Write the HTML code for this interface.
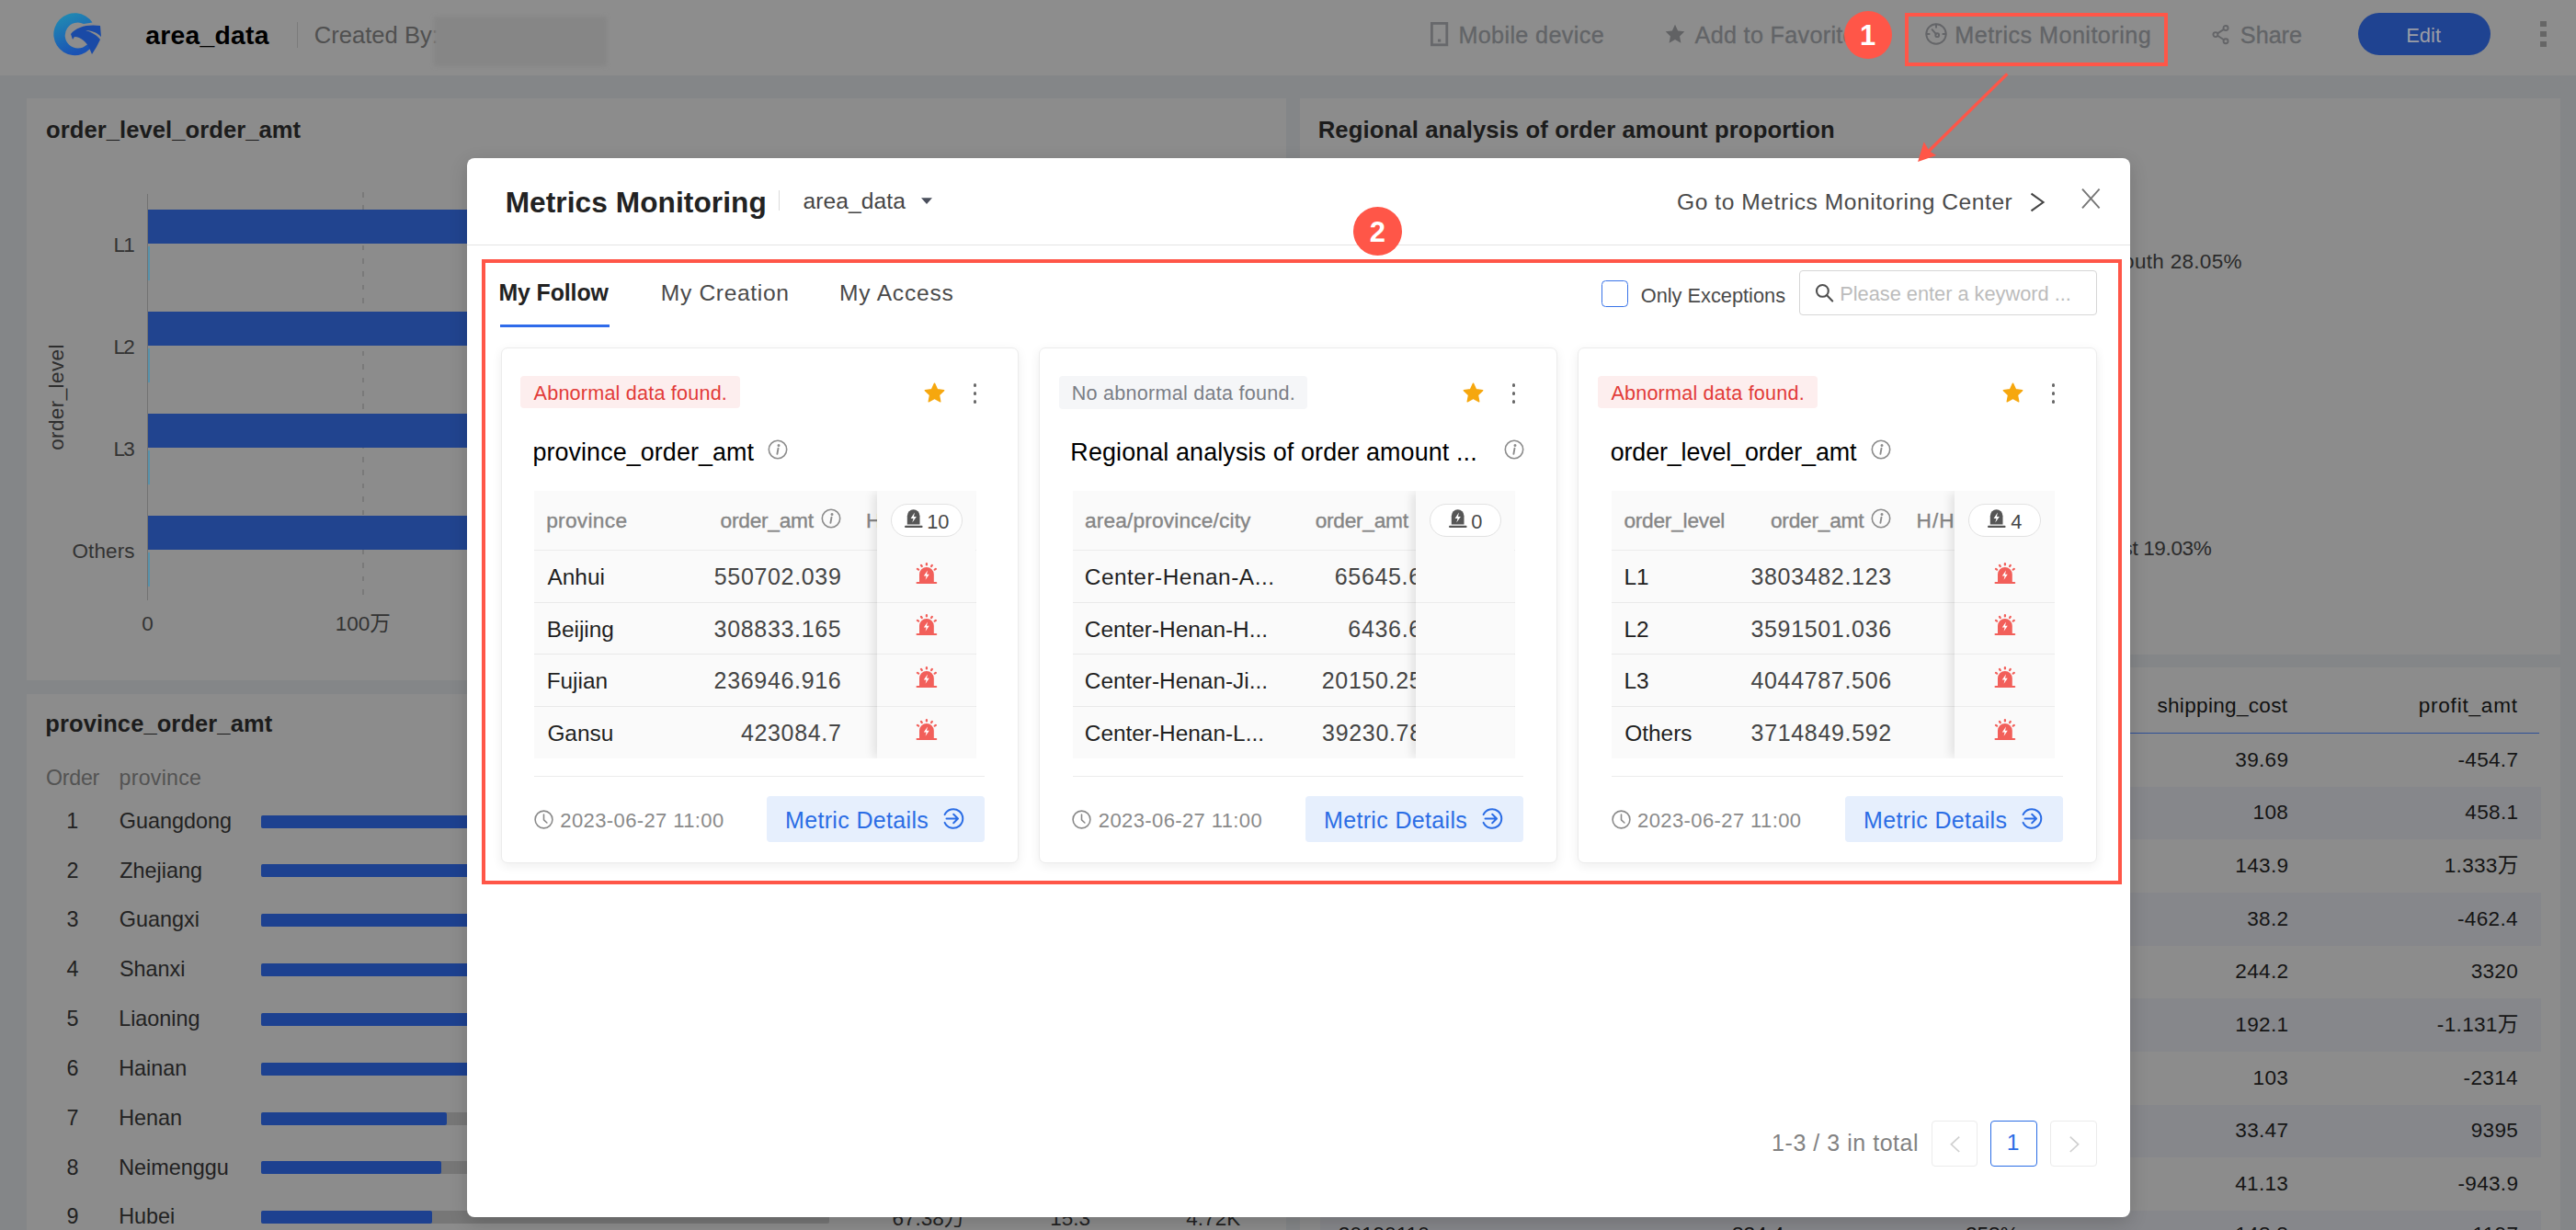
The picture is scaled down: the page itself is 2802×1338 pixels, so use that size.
<!DOCTYPE html>
<html lang="en"><head><meta charset="utf-8"><title>area_data - Metrics Monitoring</title>
<style>
*{box-sizing:border-box;margin:0;padding:0}
html,body{width:2802px;height:1338px;background:#848688}
body{font-family:'Liberation Sans','Noto Sans CJK SC',sans-serif;position:relative}
#app{position:absolute;left:0;top:0;width:2802px;height:1338px;overflow:hidden}
#app div,#app span,#app svg,#app header,#app section,#app button,#app i,#app b,#app ul,#app li,#app h1,#app h2,#app h3,#app table,#app a,#app label,#app nav{position:absolute}
.t{white-space:pre;line-height:1;font-weight:400}
h1,h2,h3{font-weight:700}
button{border:0;background:none;font:inherit}
ul{list-style:none}
.topbar{left:0;top:0;width:2802px;height:82px;background:#8d8d8d}
.panel{background:#8c8c8c}
.modal{left:508px;top:172px;width:1809.4px;height:1151.8px;background:#fff;border-radius:8px;box-shadow:0 6px 20px rgba(0,0,0,.16)}
.card{height:560.7px;top:378px;background:#fff;border:1px solid #ececec;border-radius:7px;box-shadow:0 3px 12px rgba(0,0,0,.07)}
.tbl{background:#fafafa;overflow:hidden}
.fix{background:#fafafa;box-shadow:-6px 0 10px -2px rgba(0,0,0,.10)}
.pill{background:#fff;border:1px solid #e2e2e2;border-radius:18px}
.ln{background:#ececec;height:1px}
.redbox{border:4px solid #ff5648}
.dot{border-radius:50%;background:#ff5648}
</style></head>
<body><div id="app">
<header class="topbar"><svg style="left:56px;top:9px" width="58" height="54" viewBox="0 0 58 54">
<defs><linearGradient id="lg" x1="0" y1="0" x2="0.4" y2="1"><stop offset="0" stop-color="#2191b2"/><stop offset="1" stop-color="#1a52b4"/></linearGradient></defs>
<path d="M44.5 15.5 A23 23 0 1 0 47 36 L38 40 A14 14 0 1 1 35 17 Z" fill="url(#lg)"/>
<path d="M21 28 C27 20 40 17 53 19 L54 31 C49 26 43 24 37 24 C44 26 50 30 53 34 L49 42 L44 50 L41 43 C38 37 32 31 25 31 L23 34 Z" fill="#1a4aa6"/>
</svg><h1 class="t" style="left:158.29px;top:23.85px;font-size:28.3px;color:#000;font-weight:700;letter-spacing:0.25px;">area_data</h1><div style="left:323px;top:24px;width:1.2px;height:27.5px;background:#7b7b7b"></div><span class="t" style="left:341.72px;top:26.2px;font-size:25.6px;color:#505050;">Created By:</span><div style="left:472px;top:18px;width:188px;height:54px;background:#868686;filter:blur(2px);border-radius:3px"></div><svg style="left:1554px;top:22px" width="24" height="30" viewBox="0 0 24 30"><rect x="3.4" y="3.4" width="16.4" height="23.4" fill="none" stroke="#67686b" stroke-width="2.8"/><rect x="10" y="20.6" width="3.2" height="3" fill="#67686b"/></svg><span class="t" style="left:1586.38px;top:26.4px;font-size:25.2px;color:#626467;letter-spacing:0.36px;-webkit-text-stroke:.3px #626467;">Mobile device</span><svg style="left:1810.5px;top:26px" width="22" height="21.4" viewBox="0 0 24 23" preserveAspectRatio="none"><path d="M12 0.8l3.4 7.2 7.8 1-5.7 5.4 1.5 7.8L12 18.4l-7 3.8 1.5-7.8L0.8 9l7.8-1z" fill="#616264"/></svg><span class="t" style="left:1843.6px;top:26.4px;font-size:25.2px;color:#626467;letter-spacing:0.3px;-webkit-text-stroke:.3px #626467;">Add to Favorites</span><svg style="left:2093px;top:24px" width="26" height="26" viewBox="0 0 26 26" fill="none" stroke="#646568" stroke-width="1.9" stroke-linecap="round"><circle cx="13" cy="13" r="10.7"/><path d="M13 2.6v3.2M2.6 13h3M23.4 13h-3"/><circle cx="14.2" cy="14.2" r="1.9"/><path d="M12.8 12.8L8.6 8.2"/></svg><span class="t" style="left:2126.28px;top:26.4px;font-size:25.2px;color:#626467;letter-spacing:0.45px;-webkit-text-stroke:.3px #626467;">Metrics Monitoring</span><svg style="left:2405.3px;top:25.6px" width="21.4" height="23.2" viewBox="0 0 24 26" fill="none" stroke="#646568" stroke-width="2.1"><circle cx="18" cy="5" r="2.8"/><circle cx="5.5" cy="13" r="2.8"/><circle cx="18" cy="21" r="2.8"/><path d="M8 11.6L15.6 6.6M8 14.4L15.6 19.4"/></svg><span class="t" style="left:2436.87px;top:26.4px;font-size:25.2px;color:#626467;letter-spacing:-0.02px;-webkit-text-stroke:.3px #626467;">Share</span><button style="left:2565px;top:14px;width:144px;height:46px;background:#1f4391;border-radius:23px"><span class="t" style="left:52.2px;top:13.5px;font-size:22px;color:#9a9da6;">Edit</span></button><div style="left:2763px;top:23px;width:6.8px;height:6.4px;background:#666"></div><div style="left:2763px;top:34px;width:6.8px;height:6.4px;background:#666"></div><div style="left:2763px;top:44.7px;width:6.8px;height:6.4px;background:#666"></div></header>
<section class="panel" style="left:29px;top:107px;width:1370px;height:633px;"><h2 class="t" style="left:21.1px;top:22.2px;font-size:25.6px;color:#1c1c1c;font-weight:700;letter-spacing:0.05px;">order_level_order_amt</h2></section><div style="left:160px;top:211px;width:1px;height:442px;background:#727272"></div><div style="left:394px;top:209.3px;width:1.8px;height:443.7px;background:repeating-linear-gradient(to bottom,#7a7a7a 0,#7a7a7a 5.6px,transparent 5.6px,transparent 14.4px)"></div><div style="left:161px;top:228px;width:939px;height:37px;background:#21448f"></div><div style="left:160.6px;top:268px;width:2px;height:36.5px;background:#5791aa"></div><span class="t" style="left:123.5px;top:256.25px;font-size:22.5px;color:#333;letter-spacing:-1.69px;">L1</span><div style="left:161px;top:339px;width:939px;height:37px;background:#21448f"></div><div style="left:160.6px;top:379px;width:2px;height:36.5px;background:#5791aa"></div><span class="t" style="left:123.5px;top:367.25px;font-size:22.5px;color:#333;letter-spacing:-1.69px;">L2</span><div style="left:161px;top:450px;width:939px;height:37px;background:#21448f"></div><div style="left:160.6px;top:490px;width:2px;height:36.5px;background:#5791aa"></div><span class="t" style="left:123.5px;top:478.25px;font-size:22.5px;color:#333;letter-spacing:-1.8px;">L3</span><div style="left:161px;top:561px;width:939px;height:37px;background:#21448f"></div><div style="left:160.6px;top:601px;width:2px;height:36.5px;background:#5791aa"></div><span class="t" style="left:78.49px;top:589.25px;font-size:22.5px;color:#333;letter-spacing:0.12px;">Others</span><span class="t" style="left:-0.9px;top:-18.75px;font-size:22.5px;color:#2e2e2e;letter-spacing:0.4px;left:61.6px;top:432px;transform:translate(-50%,-50%) rotate(-90deg);">order_level</span><span class="t" style="left:154.26px;top:668.25px;font-size:22.5px;color:#333;">0</span><span class="t" style="left:364.81px;top:668.25px;font-size:22.5px;color:#333;">100万</span><section class="panel" style="left:29px;top:755px;width:1370px;height:645px;"><h2 class="t" style="left:20.34px;top:20.25px;font-size:25.5px;color:#1c1c1c;font-weight:700;letter-spacing:0.1px;">province_order_amt</h2><span class="t" style="left:20.96px;top:80.4px;font-size:23.2px;color:#535353;letter-spacing:-0.24px;">Order</span><span class="t" style="left:100.61px;top:80.4px;font-size:23.2px;color:#535353;letter-spacing:0.24px;">province</span></section><span class="t" style="left:72.16px;top:882.3px;font-size:23.4px;color:#222;">1</span><span class="t" style="left:129.83px;top:882.3px;font-size:23.4px;color:#222;">Guangdong</span><div style="left:284px;top:886.5px;width:618px;height:14px;background:#777;border-radius:2px"></div><div style="left:284px;top:886.5px;width:816px;height:14px;background:#1d4190;border-radius:2px"></div><span class="t" style="left:72.45px;top:936.3px;font-size:23.4px;color:#222;">2</span><span class="t" style="left:130.3px;top:936.3px;font-size:23.4px;color:#222;">Zhejiang</span><div style="left:284px;top:940.35px;width:618px;height:14px;background:#777;border-radius:2px"></div><div style="left:284px;top:940.35px;width:816px;height:14px;background:#1d4190;border-radius:2px"></div><span class="t" style="left:72.56px;top:989.3px;font-size:23.4px;color:#222;">3</span><span class="t" style="left:129.83px;top:989.3px;font-size:23.4px;color:#222;">Guangxi</span><div style="left:284px;top:994.2px;width:618px;height:14px;background:#777;border-radius:2px"></div><div style="left:284px;top:994.2px;width:816px;height:14px;background:#1d4190;border-radius:2px"></div><span class="t" style="left:72.56px;top:1043.3px;font-size:23.4px;color:#222;">4</span><span class="t" style="left:129.95px;top:1043.3px;font-size:23.4px;color:#222;">Shanxi</span><div style="left:284px;top:1048.05px;width:618px;height:14px;background:#777;border-radius:2px"></div><div style="left:284px;top:1048.05px;width:816px;height:14px;background:#1d4190;border-radius:2px"></div><span class="t" style="left:72.51px;top:1097.3px;font-size:23.4px;color:#222;">5</span><span class="t" style="left:129.13px;top:1097.3px;font-size:23.4px;color:#222;">Liaoning</span><div style="left:284px;top:1101.9px;width:618px;height:14px;background:#777;border-radius:2px"></div><div style="left:284px;top:1101.9px;width:816px;height:14px;background:#1d4190;border-radius:2px"></div><span class="t" style="left:72.39px;top:1151.3px;font-size:23.4px;color:#222;">6</span><span class="t" style="left:129.13px;top:1151.3px;font-size:23.4px;color:#222;">Hainan</span><div style="left:284px;top:1155.75px;width:618px;height:14px;background:#777;border-radius:2px"></div><div style="left:284px;top:1155.75px;width:816px;height:14px;background:#1d4190;border-radius:2px"></div><span class="t" style="left:72.45px;top:1205.3px;font-size:23.4px;color:#222;">7</span><span class="t" style="left:129.13px;top:1205.3px;font-size:23.4px;color:#222;">Henan</span><div style="left:284px;top:1209.6px;width:618px;height:14px;background:#777;border-radius:2px"></div><div style="left:284px;top:1209.6px;width:202px;height:14px;background:#1d4190;border-radius:2px"></div><span class="t" style="left:72.51px;top:1259.3px;font-size:23.4px;color:#222;">8</span><span class="t" style="left:129.13px;top:1259.3px;font-size:23.4px;color:#222;">Neimenggu</span><div style="left:284px;top:1263.45px;width:618px;height:14px;background:#777;border-radius:2px"></div><div style="left:284px;top:1263.45px;width:196px;height:14px;background:#1d4190;border-radius:2px"></div><span class="t" style="left:72.51px;top:1312.3px;font-size:23.4px;color:#222;">9</span><span class="t" style="left:129.13px;top:1312.3px;font-size:23.4px;color:#222;">Hubei</span><div style="left:284px;top:1317.3px;width:618px;height:14px;background:#777;border-radius:2px"></div><div style="left:284px;top:1317.3px;width:186px;height:14px;background:#1d4190;border-radius:2px"></div><span class="t" style="left:970.55px;top:1315.25px;font-size:22.5px;color:#222;">67.38万</span><span class="t" style="left:1142.13px;top:1315.25px;font-size:22.5px;color:#222;">15.3</span><span class="t" style="left:1290.36px;top:1315.25px;font-size:22.5px;color:#222;">4.72K</span><section class="panel" style="left:1414px;top:107px;width:1371px;height:605px;"><h2 class="t" style="left:19.73px;top:22.15px;font-size:25.7px;color:#1c1c1c;font-weight:700;letter-spacing:0.09px;">Regional analysis of order amount proportion</h2></section><span class="t" style="left:2293.81px;top:274.25px;font-size:22.5px;color:#2a2a2a;letter-spacing:0.3px;">South 28.05%</span><span class="t" style="left:2275.86px;top:586.25px;font-size:22.5px;color:#2a2a2a;letter-spacing:-0.35px;">West 19.03%</span><section class="panel" style="left:1414px;top:726px;width:1371px;height:674px;"></section><span class="t" style="left:2346.43px;top:757.2px;font-size:22.6px;color:#111;letter-spacing:0.29px;">shipping_cost</span><span class="t" style="left:2630.64px;top:757.2px;font-size:22.6px;color:#111;letter-spacing:0.77px;">profit_amt</span><div style="left:1436px;top:796.5px;width:1326px;height:1.3px;background:#2e4f97"></div><span class="t" style="left:2431.29px;top:816.2px;font-size:22.6px;color:#151515;letter-spacing:0.3px;">39.69</span><span class="t" style="left:2673.46px;top:816.2px;font-size:22.6px;color:#151515;letter-spacing:0.3px;">-454.7</span><div style="left:1436px;top:855.67px;width:1327.5px;height:57.67px;background:#86878b"></div><span class="t" style="left:2450.62px;top:873.2px;font-size:22.6px;color:#151515;letter-spacing:0.3px;">108</span><span class="t" style="left:2681.29px;top:873.2px;font-size:22.6px;color:#151515;letter-spacing:0.3px;">458.1</span><span class="t" style="left:2431.29px;top:931.2px;font-size:22.6px;color:#151515;letter-spacing:0.3px;">143.9</span><span class="t" style="left:2658.7px;top:931.2px;font-size:22.6px;color:#151515;letter-spacing:0.3px;">1.333万</span><div style="left:1436px;top:971.01px;width:1327.5px;height:57.67px;background:#86878b"></div><span class="t" style="left:2444.16px;top:989.2px;font-size:22.6px;color:#151515;letter-spacing:0.3px;">38.2</span><span class="t" style="left:2673.01px;top:989.2px;font-size:22.6px;color:#151515;letter-spacing:0.3px;">-462.4</span><span class="t" style="left:2431.29px;top:1046.2px;font-size:22.6px;color:#151515;letter-spacing:0.3px;">244.2</span><span class="t" style="left:2687.64px;top:1046.2px;font-size:22.6px;color:#151515;letter-spacing:0.3px;">3320</span><div style="left:1436px;top:1086.35px;width:1327.5px;height:57.67px;background:#86878b"></div><span class="t" style="left:2431.29px;top:1104.2px;font-size:22.6px;color:#151515;letter-spacing:0.3px;">192.1</span><span class="t" style="left:2650.87px;top:1104.2px;font-size:22.6px;color:#151515;letter-spacing:0.3px;">-1.131万</span><span class="t" style="left:2450.62px;top:1162.2px;font-size:22.6px;color:#151515;letter-spacing:0.3px;">103</span><span class="t" style="left:2679.59px;top:1162.2px;font-size:22.6px;color:#151515;letter-spacing:0.3px;">-2314</span><div style="left:1436px;top:1201.69px;width:1327.5px;height:57.67px;background:#86878b"></div><span class="t" style="left:2431.29px;top:1219.2px;font-size:22.6px;color:#151515;letter-spacing:0.3px;">33.47</span><span class="t" style="left:2687.75px;top:1219.2px;font-size:22.6px;color:#151515;letter-spacing:0.3px;">9395</span><span class="t" style="left:2431.17px;top:1277.2px;font-size:22.6px;color:#151515;letter-spacing:0.3px;">41.13</span><span class="t" style="left:2673.46px;top:1277.2px;font-size:22.6px;color:#151515;letter-spacing:0.3px;">-943.9</span><div style="left:1436px;top:1317.03px;width:1327.5px;height:57.67px;background:#86878b"></div><span class="t" style="left:2431.17px;top:1332.2px;font-size:22.6px;color:#151515;letter-spacing:0.3px;">148.8</span><span class="t" style="left:2681.72px;top:1332.2px;font-size:22.6px;color:#151515;letter-spacing:0.3px;">-1197</span><span class="t" style="left:1455.87px;top:1332.2px;font-size:22.6px;color:#151515;">20190110</span><span class="t" style="left:1884.04px;top:1332.2px;font-size:22.6px;color:#151515;">824.4</span><span class="t" style="left:2137.97px;top:1332.2px;font-size:22.6px;color:#151515;">258%</span><div class="modal">
<h2 class="t" style="left:41.65px;top:33.2px;font-size:31.6px;color:#222;font-weight:700;letter-spacing:0.09px;">Metrics Monitoring</h2><div style="left:339px;top:35px;width:1.2px;height:22px;background:#dcdcdc"></div><span class="t" style="left:365.62px;top:35.2px;font-size:24.6px;color:#454545;letter-spacing:0.06px;">area_data</span><svg style="left:493px;top:42px" width="14" height="9" viewBox="0 0 14 9"><path d="M1 1.2h12L7 8z" fill="#4a4f5c"/></svg><a class="t" style="left:1316.07px;top:36.2px;font-size:24.6px;color:#4a4a4a;letter-spacing:0.54px;">Go to Metrics Monitoring Center</a><svg style="left:1698px;top:36px" width="20" height="24" viewBox="0 0 20 24" fill="none" stroke="#454545" stroke-width="2.1"><path d="M3.5 2.6L16.5 12 3.5 21.4"/></svg><svg style="left:1754px;top:31px" width="24" height="26" viewBox="0 0 24 26" fill="none" stroke="#777" stroke-width="1.9"><path d="M3 2.6L21.6 23.4M21.6 2.6L3 23.4"/></svg><div style="left:0px;top:94px;width:1809.4px;height:1.2px;background:#e4e4e4"></div><span class="t" style="left:34.38px;top:133.55px;font-size:24.9px;color:#222;font-weight:700;letter-spacing:-0.1px;">My Follow</span><div style="left:36px;top:181px;width:119px;height:3.3px;background:#2f6bea"></div><span class="t" style="left:210.83px;top:135.2px;font-size:24.6px;color:#4a4a4a;letter-spacing:0.65px;">My Creation</span><span class="t" style="left:405.03px;top:135.2px;font-size:24.6px;color:#4a4a4a;letter-spacing:0.79px;">My Access</span><div style="left:1234px;top:133px;width:29px;height:29px;border:1.6px solid #3a74e8;border-radius:4.5px;background:#fff"></div><label class="t" style="left:1276.72px;top:138.6px;font-size:21.8px;color:#4a4a4a;letter-spacing:-0.01px;">Only Exceptions</label><div style="left:1449px;top:122.4px;width:324px;height:48.6px;border:1px solid #d6d6d6;border-radius:4px;background:#fff"></div><svg style="left:1465px;top:135px" width="23" height="23" viewBox="0 0 23 23" fill="none" stroke="#4f4f4f" stroke-width="2.1" stroke-linecap="round"><circle cx="9.4" cy="9.4" r="6.4"/><path d="M14.2 14.2l6 6.2"/></svg><span class="t" style="left:1493.26px;top:136.6px;font-size:21.8px;color:#bcbcbc;letter-spacing:-0.02px;">Please enter a keyword ...</span><div class="card" style="left:36.5px;top:206px;width:563px"><div style="left:20.5px;top:30.3px;width:239px;height:35.2px;background:#fdeeee;border-radius:4px"></div><span class="t" style="left:35.1px;top:37.7px;font-size:21.6px;color:#e23b38;letter-spacing:0.2px;">Abnormal data found.</span><svg style="left:459.7px;top:37px" width="23" height="22" viewBox="0 0 24 23"><path d="M12 1.2l3.2 6.9 7.5 1-5.5 5.2 1.4 7.5L12 18.2l-6.6 3.6 1.4-7.5L1.3 9.1l7.5-1z" fill="#f6a70e" stroke="#f6a70e" stroke-width="1.4" stroke-linejoin="round"/></svg><div style="left:513px;top:38px;width:3.6px;height:3.6px;background:#686868;border-radius:50%"></div><div style="left:513px;top:47.2px;width:3.6px;height:3.6px;background:#686868;border-radius:50%"></div><div style="left:513px;top:56.4px;width:3.6px;height:3.6px;background:#686868;border-radius:50%"></div><h3 class="t" style="left:33.89px;top:99.55px;font-size:26.9px;color:#000;letter-spacing:0.09px;font-weight:400;">province_order_amt</h3><svg style="left:289.8px;top:99.2px" width="22" height="22" viewBox="0 0 22 22" fill="none" stroke="#8c8c8c" stroke-width="1.6" stroke-linecap="round"><circle cx="11" cy="11" r="9.7"/><path d="M11.5 9.6l-1.1 6.2" stroke-width="1.9"/><circle cx="12" cy="6.4" r="0.7" fill="#8c8c8c"/></svg><div class="tbl" style="left:35.5px;top:154.5px;width:480.5px;height:291px;"><span class="t" style="left:13.14px;top:21.65px;font-size:22.7px;color:#222;letter-spacing:0.31px;color:#858585;-webkit-text-stroke:.35px #858585;">province</span><span class="t" style="left:202.59px;top:21.65px;font-size:22.7px;color:#222;letter-spacing:-0.24px;color:#858585;-webkit-text-stroke:.35px #858585;">order_amt</span><svg style="left:311.9px;top:19.1px" width="22" height="22" viewBox="0 0 22 22" fill="none" stroke="#8c8c8c" stroke-width="1.6" stroke-linecap="round"><circle cx="11" cy="11" r="9.7"/><path d="M11.5 9.6l-1.1 6.2" stroke-width="1.9"/><circle cx="12" cy="6.4" r="0.7" fill="#8c8c8c"/></svg><span class="t" style="left:361.08px;top:21.65px;font-size:22.7px;color:#222;letter-spacing:1.04px;color:#858585;-webkit-text-stroke:.35px #858585;">H/H</span><div style="left:0px;top:64.7px;width:480.5px;height:1.2px;background:#ececec"></div><span class="t" style="left:14.5px;top:82.3px;font-size:24.4px;color:#1f1f1f;">Anhui</span><span class="t" style="left:195.74px;top:81.5px;font-size:25px;color:#454545;letter-spacing:0.67px;">550702.039</span><div style="left:0px;top:121.1px;width:480.5px;height:1.2px;background:#e9e9e9"></div><span class="t" style="left:13.65px;top:139.3px;font-size:24.4px;color:#1f1f1f;">Beijing</span><span class="t" style="left:195.62px;top:138.5px;font-size:25px;color:#454545;letter-spacing:0.67px;">308833.165</span><div style="left:0px;top:177.6px;width:480.5px;height:1.2px;background:#e9e9e9"></div><span class="t" style="left:13.65px;top:195.3px;font-size:24.4px;color:#1f1f1f;">Fujian</span><span class="t" style="left:195.62px;top:194.5px;font-size:25px;color:#454545;letter-spacing:0.67px;">236946.916</span><div style="left:0px;top:234.1px;width:480.5px;height:1.2px;background:#e9e9e9"></div><span class="t" style="left:14.38px;top:252.3px;font-size:24.4px;color:#1f1f1f;">Gansu</span><span class="t" style="left:224.89px;top:251.5px;font-size:25px;color:#454545;letter-spacing:0.67px;">423084.7</span><div class="fix" style="left:372.9px;top:0px;width:107.6px;height:291px;"><div class="pill" style="left:14.7px;top:14.6px;width:78.6px;height:35.6px;"><svg style="left:14.6px;top:4.2px" width="20" height="22" viewBox="0 0 20 22"><path d="M2.8 17.6V8.2a6.85 6.85 0 0 1 13.7 0v9.4z" fill="#565656"/><path d="M10.9 4.6L6.6 11h2.9l-1.2 4.6 4.6-6.6h-2.9z" fill="#fff"/><path d="M1.1 19.9h17.4" stroke="#565656" stroke-width="2.2" stroke-linecap="round"/></svg><span class="t" style="left:38.66px;top:7.6px;font-size:21.8px;color:#484848;">10</span></div><div style="left:0px;top:121.1px;width:107.6px;height:1.2px;background:#ececec"></div><div style="left:0px;top:177.6px;width:107.6px;height:1.2px;background:#ececec"></div><div style="left:0px;top:234.1px;width:107.6px;height:1.2px;background:#ececec"></div><svg style="left:42.3px;top:78.1px" width="24" height="24" viewBox="0 0 24 24"><g stroke="#f25f5a" stroke-width="2.3" stroke-linecap="round"><path d="M11.9 1.2v1.2M6 2.9l.7 1.1M17.8 2.9l-.7 1.1M2 6.9l1.1.7M21.8 6.9l-1.1.7"/></g><path d="M4 21.2v-8.4a7.9 7.9 0 0 1 15.8 0v8.4z" fill="#f25f5a"/><path d="M1.6 22h20.6" stroke="#f25f5a" stroke-width="2.2" stroke-linecap="round"/><path d="M13 8.6l-4.2 6h2.8l-1 4.2 4.2-6H12z" fill="#fff"/></svg><svg style="left:42.3px;top:134.9px" width="24" height="24" viewBox="0 0 24 24"><g stroke="#f25f5a" stroke-width="2.3" stroke-linecap="round"><path d="M11.9 1.2v1.2M6 2.9l.7 1.1M17.8 2.9l-.7 1.1M2 6.9l1.1.7M21.8 6.9l-1.1.7"/></g><path d="M4 21.2v-8.4a7.9 7.9 0 0 1 15.8 0v8.4z" fill="#f25f5a"/><path d="M1.6 22h20.6" stroke="#f25f5a" stroke-width="2.2" stroke-linecap="round"/><path d="M13 8.6l-4.2 6h2.8l-1 4.2 4.2-6H12z" fill="#fff"/></svg><svg style="left:42.3px;top:191.7px" width="24" height="24" viewBox="0 0 24 24"><g stroke="#f25f5a" stroke-width="2.3" stroke-linecap="round"><path d="M11.9 1.2v1.2M6 2.9l.7 1.1M17.8 2.9l-.7 1.1M2 6.9l1.1.7M21.8 6.9l-1.1.7"/></g><path d="M4 21.2v-8.4a7.9 7.9 0 0 1 15.8 0v8.4z" fill="#f25f5a"/><path d="M1.6 22h20.6" stroke="#f25f5a" stroke-width="2.2" stroke-linecap="round"/><path d="M13 8.6l-4.2 6h2.8l-1 4.2 4.2-6H12z" fill="#fff"/></svg><svg style="left:42.3px;top:248.5px" width="24" height="24" viewBox="0 0 24 24"><g stroke="#f25f5a" stroke-width="2.3" stroke-linecap="round"><path d="M11.9 1.2v1.2M6 2.9l.7 1.1M17.8 2.9l-.7 1.1M2 6.9l1.1.7M21.8 6.9l-1.1.7"/></g><path d="M4 21.2v-8.4a7.9 7.9 0 0 1 15.8 0v8.4z" fill="#f25f5a"/><path d="M1.6 22h20.6" stroke="#f25f5a" stroke-width="2.2" stroke-linecap="round"/><path d="M13 8.6l-4.2 6h2.8l-1 4.2 4.2-6H12z" fill="#fff"/></svg></div></div><div style="left:35.5px;top:464.8px;width:490.4px;height:1.2px;background:#ececec"></div><svg style="left:35.3px;top:502px" width="21" height="21" viewBox="0 0 21 21" fill="none" stroke="#8a8a8a" stroke-width="1.6" stroke-linecap="round" stroke-linejoin="round"><circle cx="10.5" cy="10.5" r="9.4"/><path d="M10.5 5v5.8l3.4 3.2"/></svg><span class="t" style="left:63.8px;top:502.5px;font-size:22px;color:#8a8a8a;letter-spacing:0.39px;">2023-06-27 11:00</span><button style="left:288.5px;top:487.4px;width:237px;height:50.1px;background:#e6effd;border-radius:4px"><span class="t" style="left:20px;top:13.5px;font-size:25px;color:#2b6de5;letter-spacing:0.34px;">Metric Details</span><svg style="left:189.6px;top:11.8px" width="25" height="25" viewBox="0 0 25 25" fill="none" stroke="#2b6de5" stroke-width="2" stroke-linecap="round" stroke-linejoin="round"><path d="M3.6 8.2A10.3 10.3 0 1 1 3.6 16.8"/><path d="M5.5 12.5h12.4M13.2 7.8l4.8 4.7-4.8 4.7"/></svg></button></div>
<div class="card" style="left:622px;top:206px;width:563.5px"><div style="left:21px;top:30.2px;width:269.8px;height:35.5px;background:#f5f6f8;border-radius:4px"></div><span class="t" style="left:34.67px;top:37.7px;font-size:21.6px;color:#7b7e86;letter-spacing:0.24px;">No abnormal data found.</span><svg style="left:460.2px;top:37px" width="23" height="22" viewBox="0 0 24 23"><path d="M12 1.2l3.2 6.9 7.5 1-5.5 5.2 1.4 7.5L12 18.2l-6.6 3.6 1.4-7.5L1.3 9.1l7.5-1z" fill="#f6a70e" stroke="#f6a70e" stroke-width="1.4" stroke-linejoin="round"/></svg><div style="left:513.5px;top:38px;width:3.6px;height:3.6px;background:#686868;border-radius:50%"></div><div style="left:513.5px;top:47.2px;width:3.6px;height:3.6px;background:#686868;border-radius:50%"></div><div style="left:513.5px;top:56.4px;width:3.6px;height:3.6px;background:#686868;border-radius:50%"></div><h3 class="t" style="left:33.35px;top:99.55px;font-size:26.9px;color:#000;letter-spacing:0.12px;font-weight:400;">Regional analysis of order amount ...</h3><svg style="left:504.5px;top:99.2px" width="22" height="22" viewBox="0 0 22 22" fill="none" stroke="#8c8c8c" stroke-width="1.6" stroke-linecap="round"><circle cx="11" cy="11" r="9.7"/><path d="M11.5 9.6l-1.1 6.2" stroke-width="1.9"/><circle cx="12" cy="6.4" r="0.7" fill="#8c8c8c"/></svg><div class="tbl" style="left:35.5px;top:154.5px;width:481px;height:291px;"><span class="t" style="left:13.59px;top:21.65px;font-size:22.7px;color:#222;letter-spacing:0.15px;color:#858585;-webkit-text-stroke:.35px #858585;">area/province/city</span><span class="t" style="left:264.19px;top:21.65px;font-size:22.7px;color:#222;letter-spacing:-0.26px;color:#858585;-webkit-text-stroke:.35px #858585;">order_amt</span><div style="left:0px;top:64.7px;width:481px;height:1.2px;background:#ececec"></div><span class="t" style="left:13.28px;top:82.3px;font-size:24.4px;color:#1f1f1f;letter-spacing:0.52px;">Center-Henan-A...</span><span class="t" style="left:285.25px;top:81.5px;font-size:25px;color:#454545;letter-spacing:0.67px;">65645.62</span><div style="left:0px;top:121.1px;width:481px;height:1.2px;background:#e9e9e9"></div><span class="t" style="left:13.28px;top:139.3px;font-size:24.4px;color:#1f1f1f;">Center-Henan-H...</span><span class="t" style="left:299.85px;top:138.5px;font-size:25px;color:#454545;letter-spacing:0.67px;">6436.65</span><div style="left:0px;top:177.6px;width:481px;height:1.2px;background:#e9e9e9"></div><span class="t" style="left:13.28px;top:195.3px;font-size:24.4px;color:#1f1f1f;">Center-Henan-Ji...</span><span class="t" style="left:271.25px;top:194.5px;font-size:25px;color:#454545;letter-spacing:0.67px;">20150.255</span><div style="left:0px;top:234.1px;width:481px;height:1.2px;background:#e9e9e9"></div><span class="t" style="left:13.28px;top:252.3px;font-size:24.4px;color:#1f1f1f;">Center-Henan-L...</span><span class="t" style="left:271.62px;top:251.5px;font-size:25px;color:#454545;letter-spacing:0.67px;">39230.785</span><div class="fix" style="left:373.4px;top:0px;width:107.6px;height:291px;"><div class="pill" style="left:14.7px;top:14.6px;width:78.6px;height:35.6px;"><svg style="left:20px;top:4.2px" width="20" height="22" viewBox="0 0 20 22"><path d="M2.8 17.6V8.2a6.85 6.85 0 0 1 13.7 0v9.4z" fill="#565656"/><path d="M10.9 4.6L6.6 11h2.9l-1.2 4.6 4.6-6.6h-2.9z" fill="#fff"/><path d="M1.1 19.9h17.4" stroke="#565656" stroke-width="2.2" stroke-linecap="round"/></svg><span class="t" style="left:44.74px;top:7.6px;font-size:21.8px;color:#484848;">0</span></div><div style="left:0px;top:121.1px;width:107.6px;height:1.2px;background:#ececec"></div><div style="left:0px;top:177.6px;width:107.6px;height:1.2px;background:#ececec"></div><div style="left:0px;top:234.1px;width:107.6px;height:1.2px;background:#ececec"></div></div></div><div style="left:35.5px;top:464.8px;width:490.9px;height:1.2px;background:#ececec"></div><svg style="left:35.3px;top:502px" width="21" height="21" viewBox="0 0 21 21" fill="none" stroke="#8a8a8a" stroke-width="1.6" stroke-linecap="round" stroke-linejoin="round"><circle cx="10.5" cy="10.5" r="9.4"/><path d="M10.5 5v5.8l3.4 3.2"/></svg><span class="t" style="left:63.8px;top:502.5px;font-size:22px;color:#8a8a8a;letter-spacing:0.39px;">2023-06-27 11:00</span><button style="left:289px;top:487.4px;width:237px;height:50.1px;background:#e6effd;border-radius:4px"><span class="t" style="left:20px;top:13.5px;font-size:25px;color:#2b6de5;letter-spacing:0.34px;">Metric Details</span><svg style="left:189.6px;top:11.8px" width="25" height="25" viewBox="0 0 25 25" fill="none" stroke="#2b6de5" stroke-width="2" stroke-linecap="round" stroke-linejoin="round"><path d="M3.6 8.2A10.3 10.3 0 1 1 3.6 16.8"/><path d="M5.5 12.5h12.4M13.2 7.8l4.8 4.7-4.8 4.7"/></svg></button></div>
<div class="card" style="left:1208.3px;top:206px;width:564.3px"><div style="left:20.5px;top:30.3px;width:239px;height:35.2px;background:#fdeeee;border-radius:4px"></div><span class="t" style="left:35.1px;top:37.7px;font-size:21.6px;color:#e23b38;letter-spacing:0.2px;">Abnormal data found.</span><svg style="left:461px;top:37px" width="23" height="22" viewBox="0 0 24 23"><path d="M12 1.2l3.2 6.9 7.5 1-5.5 5.2 1.4 7.5L12 18.2l-6.6 3.6 1.4-7.5L1.3 9.1l7.5-1z" fill="#f6a70e" stroke="#f6a70e" stroke-width="1.4" stroke-linejoin="round"/></svg><div style="left:514.3px;top:38px;width:3.6px;height:3.6px;background:#686868;border-radius:50%"></div><div style="left:514.3px;top:47.2px;width:3.6px;height:3.6px;background:#686868;border-radius:50%"></div><div style="left:514.3px;top:56.4px;width:3.6px;height:3.6px;background:#686868;border-radius:50%"></div><h3 class="t" style="left:34.42px;top:99.55px;font-size:26.9px;color:#000;letter-spacing:-0.14px;font-weight:400;">order_level_order_amt</h3><svg style="left:317.5px;top:99.2px" width="22" height="22" viewBox="0 0 22 22" fill="none" stroke="#8c8c8c" stroke-width="1.6" stroke-linecap="round"><circle cx="11" cy="11" r="9.7"/><path d="M11.5 9.6l-1.1 6.2" stroke-width="1.9"/><circle cx="12" cy="6.4" r="0.7" fill="#8c8c8c"/></svg><div class="tbl" style="left:35.5px;top:154.5px;width:481.8px;height:291px;"><span class="t" style="left:13.59px;top:21.65px;font-size:22.7px;color:#222;letter-spacing:-0.23px;color:#858585;-webkit-text-stroke:.35px #858585;">order_level</span><span class="t" style="left:173.19px;top:21.65px;font-size:22.7px;color:#222;letter-spacing:-0.24px;color:#858585;-webkit-text-stroke:.35px #858585;">order_amt</span><svg style="left:282.5px;top:19.1px" width="22" height="22" viewBox="0 0 22 22" fill="none" stroke="#8c8c8c" stroke-width="1.6" stroke-linecap="round"><circle cx="11" cy="11" r="9.7"/><path d="M11.5 9.6l-1.1 6.2" stroke-width="1.9"/><circle cx="12" cy="6.4" r="0.7" fill="#8c8c8c"/></svg><span class="t" style="left:331.68px;top:21.65px;font-size:22.7px;color:#222;letter-spacing:1.04px;color:#858585;-webkit-text-stroke:.35px #858585;">H/H</span><div style="left:0px;top:64.7px;width:481.8px;height:1.2px;background:#ececec"></div><span class="t" style="left:13.65px;top:82.3px;font-size:24.4px;color:#1f1f1f;">L1</span><span class="t" style="left:151.64px;top:81.5px;font-size:25px;color:#454545;letter-spacing:0.67px;">3803482.123</span><div style="left:0px;top:121.1px;width:481.8px;height:1.2px;background:#e9e9e9"></div><span class="t" style="left:13.65px;top:139.3px;font-size:24.4px;color:#1f1f1f;">L2</span><span class="t" style="left:151.64px;top:138.5px;font-size:25px;color:#454545;letter-spacing:0.67px;">3591501.036</span><div style="left:0px;top:177.6px;width:481.8px;height:1.2px;background:#e9e9e9"></div><span class="t" style="left:13.65px;top:195.3px;font-size:24.4px;color:#1f1f1f;">L3</span><span class="t" style="left:151.64px;top:194.5px;font-size:25px;color:#454545;letter-spacing:0.67px;">4044787.506</span><div style="left:0px;top:234.1px;width:481.8px;height:1.2px;background:#e9e9e9"></div><span class="t" style="left:14.5px;top:252.3px;font-size:24.4px;color:#1f1f1f;">Others</span><span class="t" style="left:151.77px;top:251.5px;font-size:25px;color:#454545;letter-spacing:0.67px;">3714849.592</span><div class="fix" style="left:373px;top:0px;width:108.8px;height:291px;"><div class="pill" style="left:15.3px;top:14.6px;width:78.6px;height:35.6px;"><svg style="left:20px;top:4.2px" width="20" height="22" viewBox="0 0 20 22"><path d="M2.8 17.6V8.2a6.85 6.85 0 0 1 13.7 0v9.4z" fill="#565656"/><path d="M10.9 4.6L6.6 11h2.9l-1.2 4.6 4.6-6.6h-2.9z" fill="#fff"/><path d="M1.1 19.9h17.4" stroke="#565656" stroke-width="2.2" stroke-linecap="round"/></svg><span class="t" style="left:45.06px;top:7.6px;font-size:21.8px;color:#484848;">4</span></div><div style="left:0px;top:121.1px;width:108.8px;height:1.2px;background:#ececec"></div><div style="left:0px;top:177.6px;width:108.8px;height:1.2px;background:#ececec"></div><div style="left:0px;top:234.1px;width:108.8px;height:1.2px;background:#ececec"></div><svg style="left:42.9px;top:78.1px" width="24" height="24" viewBox="0 0 24 24"><g stroke="#f25f5a" stroke-width="2.3" stroke-linecap="round"><path d="M11.9 1.2v1.2M6 2.9l.7 1.1M17.8 2.9l-.7 1.1M2 6.9l1.1.7M21.8 6.9l-1.1.7"/></g><path d="M4 21.2v-8.4a7.9 7.9 0 0 1 15.8 0v8.4z" fill="#f25f5a"/><path d="M1.6 22h20.6" stroke="#f25f5a" stroke-width="2.2" stroke-linecap="round"/><path d="M13 8.6l-4.2 6h2.8l-1 4.2 4.2-6H12z" fill="#fff"/></svg><svg style="left:42.9px;top:134.9px" width="24" height="24" viewBox="0 0 24 24"><g stroke="#f25f5a" stroke-width="2.3" stroke-linecap="round"><path d="M11.9 1.2v1.2M6 2.9l.7 1.1M17.8 2.9l-.7 1.1M2 6.9l1.1.7M21.8 6.9l-1.1.7"/></g><path d="M4 21.2v-8.4a7.9 7.9 0 0 1 15.8 0v8.4z" fill="#f25f5a"/><path d="M1.6 22h20.6" stroke="#f25f5a" stroke-width="2.2" stroke-linecap="round"/><path d="M13 8.6l-4.2 6h2.8l-1 4.2 4.2-6H12z" fill="#fff"/></svg><svg style="left:42.9px;top:191.7px" width="24" height="24" viewBox="0 0 24 24"><g stroke="#f25f5a" stroke-width="2.3" stroke-linecap="round"><path d="M11.9 1.2v1.2M6 2.9l.7 1.1M17.8 2.9l-.7 1.1M2 6.9l1.1.7M21.8 6.9l-1.1.7"/></g><path d="M4 21.2v-8.4a7.9 7.9 0 0 1 15.8 0v8.4z" fill="#f25f5a"/><path d="M1.6 22h20.6" stroke="#f25f5a" stroke-width="2.2" stroke-linecap="round"/><path d="M13 8.6l-4.2 6h2.8l-1 4.2 4.2-6H12z" fill="#fff"/></svg><svg style="left:42.9px;top:248.5px" width="24" height="24" viewBox="0 0 24 24"><g stroke="#f25f5a" stroke-width="2.3" stroke-linecap="round"><path d="M11.9 1.2v1.2M6 2.9l.7 1.1M17.8 2.9l-.7 1.1M2 6.9l1.1.7M21.8 6.9l-1.1.7"/></g><path d="M4 21.2v-8.4a7.9 7.9 0 0 1 15.8 0v8.4z" fill="#f25f5a"/><path d="M1.6 22h20.6" stroke="#f25f5a" stroke-width="2.2" stroke-linecap="round"/><path d="M13 8.6l-4.2 6h2.8l-1 4.2 4.2-6H12z" fill="#fff"/></svg></div></div><div style="left:35.5px;top:464.8px;width:491.7px;height:1.2px;background:#ececec"></div><svg style="left:35.3px;top:502px" width="21" height="21" viewBox="0 0 21 21" fill="none" stroke="#8a8a8a" stroke-width="1.6" stroke-linecap="round" stroke-linejoin="round"><circle cx="10.5" cy="10.5" r="9.4"/><path d="M10.5 5v5.8l3.4 3.2"/></svg><span class="t" style="left:63.8px;top:502.5px;font-size:22px;color:#8a8a8a;letter-spacing:0.39px;">2023-06-27 11:00</span><button style="left:289.8px;top:487.4px;width:237px;height:50.1px;background:#e6effd;border-radius:4px"><span class="t" style="left:20px;top:13.5px;font-size:25px;color:#2b6de5;letter-spacing:0.34px;">Metric Details</span><svg style="left:189.6px;top:11.8px" width="25" height="25" viewBox="0 0 25 25" fill="none" stroke="#2b6de5" stroke-width="2" stroke-linecap="round" stroke-linejoin="round"><path d="M3.6 8.2A10.3 10.3 0 1 1 3.6 16.8"/><path d="M5.5 12.5h12.4M13.2 7.8l4.8 4.7-4.8 4.7"/></svg></button></div>
<span class="t" style="left:1419.12px;top:1058.5px;font-size:25px;color:#828282;letter-spacing:0.53px;">1-3 / 3 in total</span><div style="left:1593px;top:1047.3px;width:50px;height:49.5px;border:1px solid #ebebeb;border-radius:4px"><svg style="left:17px;top:14px" width="16" height="22" viewBox="0 0 16 22" fill="none" stroke="#d0d0d0" stroke-width="1.7"><path d="M12.2 2.6L3.4 10.8l8.8 8.2"/></svg></div><div style="left:1657px;top:1047.3px;width:51px;height:49.5px;border:1.6px solid #2b6de5;border-radius:4px"><span class="t" style="left:16.7px;top:11.2px;font-size:24.6px;color:#2b6de5;">1</span></div><div style="left:1722px;top:1047.3px;width:50.6px;height:49.5px;border:1px solid #ebebeb;border-radius:4px"><svg style="left:17px;top:14px" width="16" height="22" viewBox="0 0 16 22" fill="none" stroke="#d0d0d0" stroke-width="1.7"><path d="M3.8 2.6l8.8 8.2-8.8 8.2"/></svg></div></div>
<div class="redbox" style="left:524px;top:282px;width:1784px;height:680px;"></div><div class="redbox" style="left:2072px;top:14px;width:286px;height:58px;"></div><div class="dot" style="left:2006px;top:11.8px;width:52.4px;height:52.4px;"><span class="t" style="left:17.05px;top:11px;font-size:31px;color:#fff;font-weight:700;">1</span></div><div class="dot" style="left:1471.7px;top:225.3px;width:53px;height:53px;"><span class="t" style="left:17.98px;top:12px;font-size:31px;color:#fff;font-weight:700;">2</span></div><svg style="left:2070px;top:70px" width="130" height="120" viewBox="2070 70 130 120"><path d="M2183.4 80.4L2094 168.2" stroke="#ff5648" stroke-width="3.4" fill="none"/><path d="M2086.1 175.9L2092.7 154.2L2098.6 164.2L2106.2 169Z" fill="#ff5648"/></svg></div></body></html>
